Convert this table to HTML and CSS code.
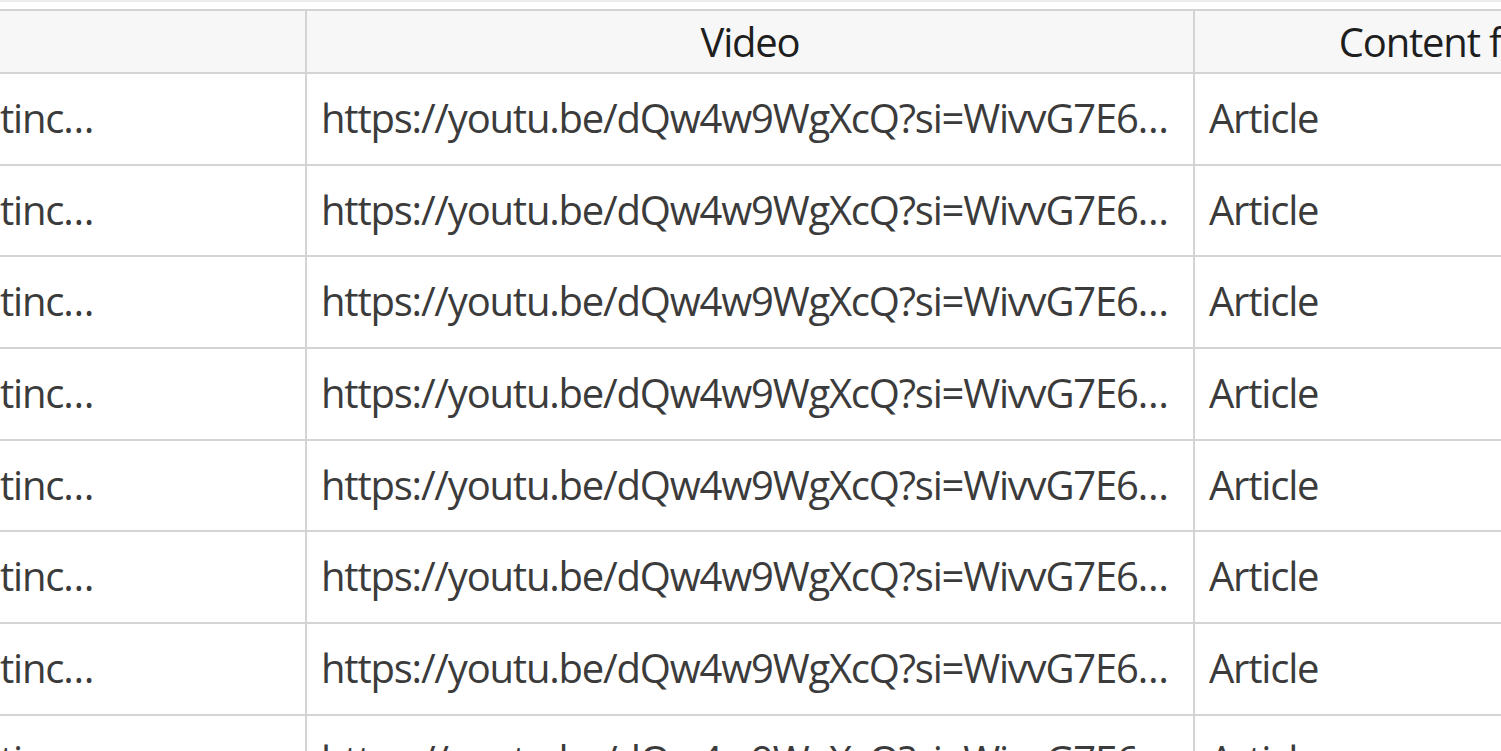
FILE: index.html
```html
<!DOCTYPE html>
<html lang="en">
<head>
<meta charset="utf-8">
<title>Table</title>
<link rel="stylesheet" href="styles.css">
</head>
<body>
<div class="topline"></div>
<div class="viewport">
  <div class="grid" role="table">
    <div class="cell head" role="columnheader"></div>
    <div class="cell head" role="columnheader">Video</div>
    <div class="cell head" role="columnheader">Content format</div>

    <div class="cell">tinc…</div><div class="cell">https://youtu.be/dQw4w9WgXcQ?si=WivvG7E6…</div><div class="cell">Article</div>
    <div class="cell">tinc…</div><div class="cell">https://youtu.be/dQw4w9WgXcQ?si=WivvG7E6…</div><div class="cell">Article</div>
    <div class="cell">tinc…</div><div class="cell">https://youtu.be/dQw4w9WgXcQ?si=WivvG7E6…</div><div class="cell">Article</div>
    <div class="cell">tinc…</div><div class="cell">https://youtu.be/dQw4w9WgXcQ?si=WivvG7E6…</div><div class="cell">Article</div>
    <div class="cell">tinc…</div><div class="cell">https://youtu.be/dQw4w9WgXcQ?si=WivvG7E6…</div><div class="cell">Article</div>
    <div class="cell">tinc…</div><div class="cell">https://youtu.be/dQw4w9WgXcQ?si=WivvG7E6…</div><div class="cell">Article</div>
    <div class="cell">tinc…</div><div class="cell">https://youtu.be/dQw4w9WgXcQ?si=WivvG7E6…</div><div class="cell">Article</div>
    <div class="cell">tinc…</div><div class="cell">https://youtu.be/dQw4w9WgXcQ?si=WivvG7E6…</div><div class="cell">Article</div>
  </div>
</div>
</body>
</html>
```
FILE: styles.css
```css
html, body {
  margin: 0;
  padding: 0;
  background: #ffffff;
  overflow: hidden;
  height: 751px;
}
body {
  font-family: "Open Sans", "Noto Sans", sans-serif;
  font-size: 40px;
  letter-spacing: -1.2px;
  color: #3b3b3b;
}
.topline {
  height: 2px;
  background: #ececec;
}
.viewport {
  margin-top: 7px;
  overflow: hidden;
}
.grid {
  display: grid;
  grid-template-columns: 321px 888px 560px;
  grid-template-rows: 65px;
  grid-auto-rows: 91.7px;
  margin-left: -14px;
  width: max-content;
}
.cell {
  box-sizing: border-box;
  display: flex;
  align-items: center;
  padding: 0 14px 3px;
  border-right: 2px solid #d4d4d4;
  border-bottom: 2px solid #d4d4d4;
  white-space: nowrap;
  overflow: hidden;
}
.head {
  background: #f7f7f7;
  border-top: 2px solid #d4d4d4;
  justify-content: center;
  padding-bottom: 0;
  color: #1e1e1e;
}
```
